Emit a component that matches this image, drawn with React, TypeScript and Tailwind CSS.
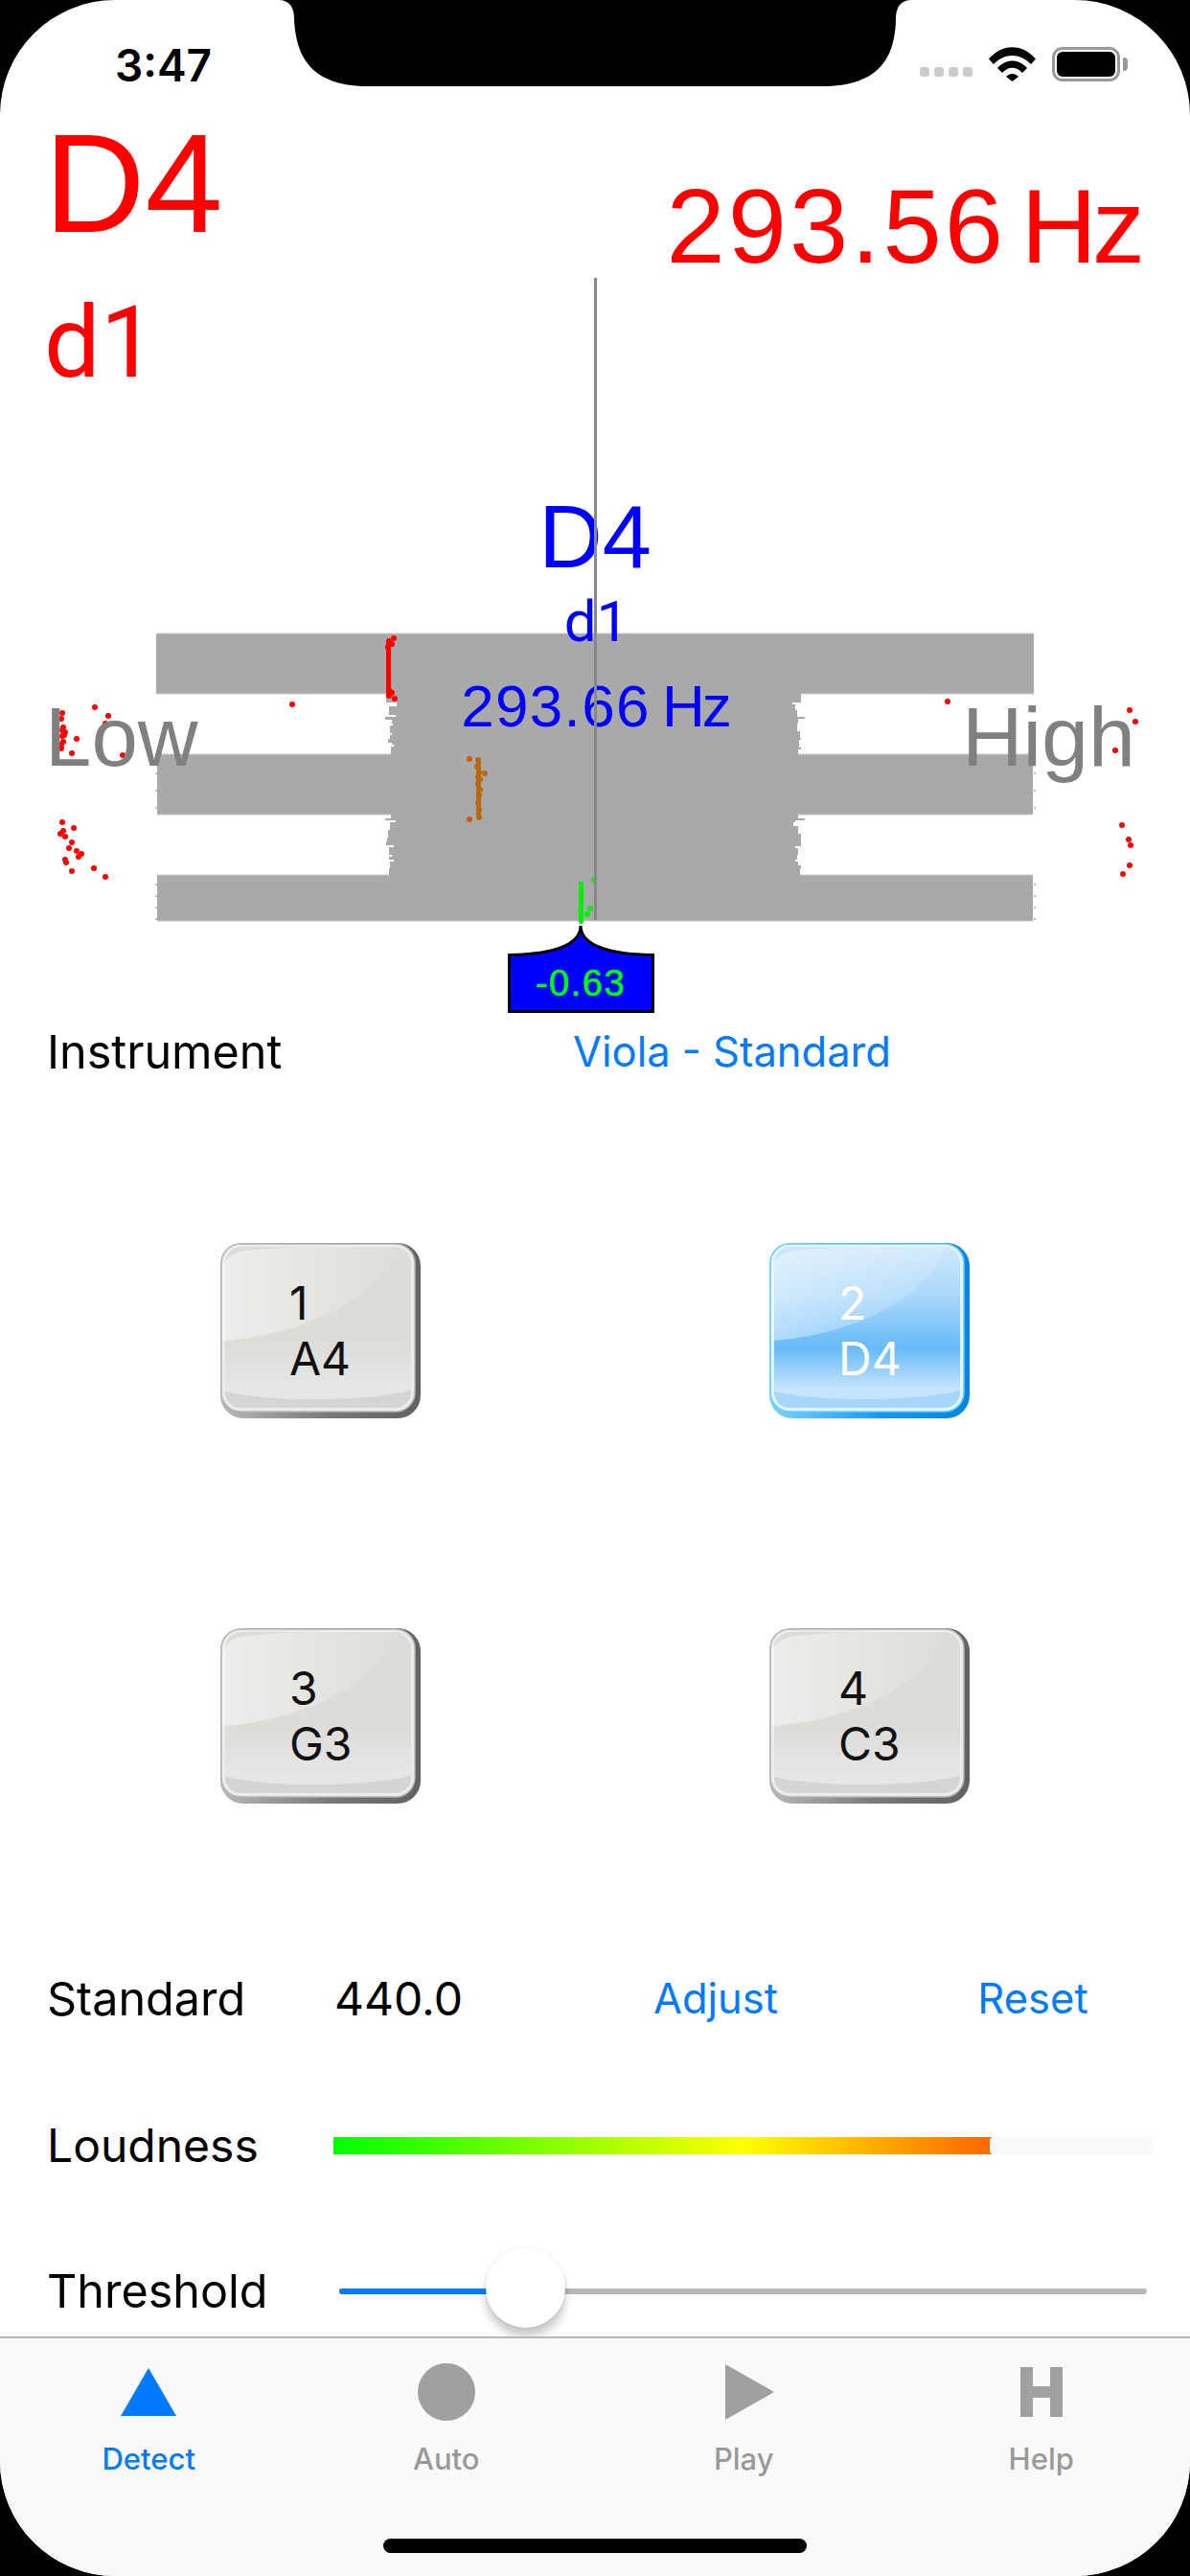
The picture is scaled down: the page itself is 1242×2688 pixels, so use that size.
import type { ReactNode } from 'react'

const HELV = "font-['Liberation_Sans',Arial,sans-serif]"

// sampled off the trace: [y where the step starts, x of the gray edge]
const EDGE_L1 = [[724, 403], [733, 414], [737, 406], [746, 413], [748, 402], [751, 409], [755, 410], [757, 407], [765, 409], [767, 407], [771, 405], [775, 409], [777, 411], [779, 408]]
const EDGE_L2 = [[850, 408], [854, 402], [856, 413], [858, 407], [866, 405], [874, 404], [878, 403], [882, 411], [884, 406], [892, 409], [894, 406], [897, 411], [899, 407], [906, 406]]
const EDGE_R1 = [[724, 836], [733, 827], [735, 830], [741, 832], [748, 840], [750, 833], [755, 832], [763, 835], [770, 836], [772, 834], [780, 836], [782, 833]]
const EDGE_R2 = [[850, 833], [854, 840], [856, 830], [858, 828], [862, 833], [870, 836], [880, 836], [883, 830], [885, 833], [892, 832], [897, 830], [899, 833], [903, 836], [906, 835]]
const END_TICKS = [[162, 806], [162, 824], [162, 842], [162, 922], [162, 934], [162, 946], [162, 958], [1079, 806], [1079, 824], [1079, 842], [1079, 922], [1079, 934], [1079, 946], [1079, 958]]

const RED_DOTS = [
  [65, 744], [64, 750], [66, 759], [65, 762], [68, 764], [67, 767], [65, 768], [66, 774], [64, 777], [64, 781], [75, 786], [80, 771],
  [99, 738], [113, 747], [110, 755], [128, 788], [305, 735],
  [65, 858], [77, 864], [66, 867], [63, 870], [68, 873], [75, 879], [72, 885], [80, 888], [85, 891], [82, 894], [68, 897], [69, 900],
  [75, 909], [98, 906], [110, 915],
  [989, 732], [1179, 741], [1185, 753], [1164, 783], [1171, 861], [1178, 876], [1180, 882], [1179, 903], [1172, 912],
]
const RED_TRACE = [[411, 666], [406, 669], [409, 672], [405, 675], [406, 720], [409, 723], [406, 726], [412, 729]]
const BROWN_DOTS = [[499, 793], [498, 800], [500, 806], [499, 811], [501, 813], [499, 818], [501, 824], [500, 830], [499, 838], [500, 845], [500, 853], [506, 807]]
const ORANGE_DOTS = [[490, 792], [490, 855]]
const GREEN_DOTS = [[620, 918], [616, 948], [613, 954], [606, 951]]

function Edge({ steps, stop, to }: { steps: number[][]; stop: number; to: number }) {
  return (
    <>
      {steps.map(([y, x], i) => {
        const next = i + 1 < steps.length ? steps[i + 1][0] : stop
        return <rect key={y} x={Math.min(x, to)} y={y} width={Math.abs(to - x)} height={next - y} fill="#a9a9a9" />
      })}
    </>
  )
}

function TunerChart() {
  return (
    <svg viewBox="0 120 1242 950" className="absolute inset-0 w-[1242px] h-[950px]">
      <rect x="163" y="661" width="916" height="63" fill="#a9a9a9" />
      <rect x="164" y="787" width="914" height="63" fill="#a9a9a9" />
      <rect x="164" y="913" width="914" height="48" fill="#a9a9a9" />
      <rect x="414" y="724" width="413" height="189" fill="#a9a9a9" />
      <Edge steps={EDGE_L1} stop={787} to={414} />
      <Edge steps={EDGE_L2} stop={913} to={414} />
      <Edge steps={EDGE_R1} stop={787} to={827} />
      <Edge steps={EDGE_R2} stop={913} to={827} />
      {END_TICKS.map(([x, y]) => <rect key={`${x}-${y}`} x={x} y={y} width="2" height="2" fill="#bdbdbd" />)}
      <path d="M163 661H1079M163 724H403M836 724H1079M164 787H408M833 787H1078M164 850H408M833 850H1078M164 913H406M835 913H1078M164 961H1078" stroke="#c9c9c9" strokeWidth="1" fill="none" />

      <rect x="403" y="668" width="5" height="60" fill="#ff0000" />
      {RED_TRACE.map(([x, y]) => <circle key={`${x}-${y}`} cx={x} cy={y} r="3" fill="#ff0000" />)}
      {RED_DOTS.map(([x, y]) => <circle key={`${x}-${y}`} cx={x} cy={y} r="3" fill="#ff0000" />)}
      <rect x="497" y="794" width="5" height="58" rx="2" fill="#b8690a" />
      {BROWN_DOTS.map(([x, y]) => <circle key={`${x}-${y}`} cx={x} cy={y} r="3" fill="#b8690a" />)}
      {ORANGE_DOTS.map(([x, y]) => <circle key={`${x}-${y}`} cx={x} cy={y} r="3" fill="#d2580a" />)}
      <rect x="604" y="920" width="5" height="44" rx="2" fill="#00ee00" />
      {GREEN_DOTS.map(([x, y]) => <circle key={`${x}-${y}`} cx={x} cy={y} r="3" fill="#00ee00" />)}

      <path
        d="M606 966C606 985 580 996 531.500 996.500V1055.500H681.500V996.500C632 996 606 985 606 966Z"
        fill="#0000ff"
        stroke="#000000"
        strokeWidth="3"
      />
      <text x="606" y="1039" textAnchor="middle" fontSize="38" letterSpacing="1.500" stroke="#00ff00" strokeWidth="0.600" fill="#00ff00" className={HELV}>-0.63</text>
    </svg>
  )
}

function KeyArt({ active }: { active: boolean }) {
  const id = active ? 'on' : 'off'
  return (
    <svg viewBox="0 0 209 183" className="absolute inset-0 w-[209px] h-[183px]">
      <defs>
        <linearGradient id={`${id}-edge`} x1="0" x2="1" y1="0" y2="0">
          <stop offset="0" stopColor={active ? '#7fd4ff' : '#b8b8b8'} />
          <stop offset="0.55" stopColor={active ? '#149af2' : '#787878'} />
          <stop offset="1" stopColor={active ? '#0a84e0' : '#626262'} />
        </linearGradient>
        <linearGradient id={`${id}-face`} x1="0" x2="0" y1="0" y2="1">
          {active ? (
            <>
              <stop offset="0" stopColor="#cfe8fb" />
              <stop offset="0.3" stopColor="#a9d8fa" />
              <stop offset="0.63" stopColor="#67baf8" />
              <stop offset="0.88" stopColor="#c6e4fb" />
            </>
          ) : (
            <>
              <stop offset="0" stopColor="#dcdcd8" />
              <stop offset="0.6" stopColor="#dcddd9" />
              <stop offset="0.88" stopColor="#e6e6e6" />
            </>
          )}
        </linearGradient>
        <linearGradient id={`${id}-gloss`} x1="0" x2="1" y1="0" y2="0">
          <stop offset="0" stopColor="#ffffff" stopOpacity={active ? 0.45 : 0.5} />
          <stop offset="1" stopColor="#ffffff" stopOpacity={active ? 0.1 : 0.03} />
        </linearGradient>
      </defs>
      <rect x="0" y="0" width="209" height="183" rx="24" fill={`url(#${id}-edge)`} />
      <rect x="1" y="1" width="202" height="175" rx="20" fill={active ? '#e2f4ff' : '#ececec'} stroke={active ? '#68cdfb' : '#b4b4b4'} strokeWidth="1.500" />
      <rect x="5" y="4" width="194" height="168" rx="17" fill={`url(#${id}-face)`} />
      <path d="M5 155C50 166 150 166 199 154V156A16 16 0 0 1 183 172H21A16 16 0 0 1 5 156Z" fill={active ? '#a6d6f9' : '#d4d5d7'} />
      <path d="M2 102V30C2 16 14 10 28 8C80 3 130 3 185 2C170 50 100 95 2 102Z" fill={`url(#${id}-gloss)`} />
    </svg>
  )
}

function TuningKey({ num, note, active }: { num: string; note: string; active?: boolean }) {
  return (
    <div className="relative w-[209px] h-[183px]">
      <KeyArt active={!!active} />
      <div className={`relative pl-[72px] pt-[34px] text-[48px] leading-[58px] ${active ? 'text-white' : 'text-[#111111]'}`}>
        <div>{num}</div>
        <div>{note}</div>
      </div>
    </div>
  )
}

function Tab({ label, active, children }: { label: string; active?: boolean; children: ReactNode }) {
  return (
    <div className="flex flex-col items-center">
      <div className="h-[62px] flex items-center justify-center">{children}</div>
      <span className={`text-[31px] font-medium leading-[36px] mt-[21px] ${active ? 'text-[#007aff]' : 'text-[#999999]'}`}>{label}</span>
    </div>
  )
}

export default function App() {
  return (
    <div className="relative w-[1242px] h-[2688px] bg-black overflow-hidden font-['Inter',sans-serif]">
      <div className="relative w-full h-full bg-white rounded-[120px] overflow-hidden flex flex-col">
        {/* status bar */}
        <div className="h-[120px] shrink-0 flex items-start justify-between pl-[120px] pr-[65px] pt-[39px]">
          <span className="text-[46px] leading-[58px] font-semibold text-black">3:47</span>
          <div className="flex items-center gap-[17px] h-[36px] mt-[10px]">
            <div className="flex gap-[5px] mt-[16px]">
              <div className="w-[10px] h-[10px] rounded-[3px] bg-[#cccccc]" />
              <div className="w-[10px] h-[10px] rounded-[3px] bg-[#cccccc]" />
              <div className="w-[10px] h-[10px] rounded-[3px] bg-[#cccccc]" />
              <div className="w-[10px] h-[10px] rounded-[3px] bg-[#cccccc]" />
            </div>
            <svg viewBox="0 0 49 36" className="w-[49px] h-[36px]">
              <path d="M0 12.500C14 -4 35 -4 49 12.500L44 18C32 6 17 6 5 18Z" fill="#000000" />
              <path d="M9 22C18 12 31 12 40 22L35 27C28 20 21 20 14 27Z" fill="#000000" />
              <path d="M18 31C22 27 27 27 31 31L24.500 36Z" fill="#000000" />
            </svg>
            <div className="flex items-center gap-[3px]">
              <div className="w-[71px] h-[36px] rounded-[11px] border-[3px] border-[#999999] p-[2px]">
                <div className="w-full h-full rounded-[6px] bg-black" />
              </div>
              <div className="w-[5px] h-[14px] rounded-r-[4px] bg-[#999999]" />
            </div>
          </div>
        </div>

        {/* tuner */}
        <div className={`relative h-[950px] shrink-0 ${HELV}`}>
          <TunerChart />
          <div className="relative flex justify-between text-[#ff0000] pl-[46px] pr-[52px]">
            <div>
              <div className="text-[146px] leading-[144px]">D4</div>
              <div className="font-['Roboto',sans-serif] text-[104px] leading-none mt-[42px]">d1</div>
            </div>
            <div className="text-[110px] leading-none mt-[61px] [word-spacing:-15px]">
              <span className="tracking-[3px]">293.56</span> <span className="tracking-[-5px]">Hz</span>
            </div>
          </div>
          <div className="absolute left-0 right-0 top-[394px] flex flex-col items-center text-[#0000ff]">
            <div className="text-[92px] leading-none">D4</div>
            <div className="font-['Roboto',sans-serif] text-[60px] leading-none mt-[13px] ml-[3px]">d1</div>
            <div className="text-[62px] leading-none mt-[27px] [word-spacing:-5px]">
              <span className="tracking-[1.3px]">293.66</span> <span className="tracking-[-3px]">Hz</span>
            </div>
          </div>
          <div className="absolute left-[47px] top-[605px] text-[87px] leading-none text-[#808080]">Low</div>
          <div className="absolute right-[57px] top-[605px] text-[88px] leading-none text-[#808080]">High</div>
          <div className="absolute left-[620px] top-[170px] w-[3px] h-[670px] bg-[#888888]" />
        </div>

        {/* instrument */}
        <div className="h-[56px] shrink-0 flex items-center text-[48.5px] text-black pl-[49px]">
          <span className="w-[549px]">Instrument</span>
          <span className="text-[43.5px] text-[#007aff]">Viola - Standard</span>
        </div>

        {/* strings */}
        <div className="grid grid-cols-[209px_209px] gap-x-[364px] gap-y-[219px] pl-[230px] mt-[171px]">
          <TuningKey num="1" note="A4" />
          <TuningKey num="2" note="D4" active />
          <TuningKey num="3" note="G3" />
          <TuningKey num="4" note="C3" />
        </div>

        {/* controls */}
        <div className="h-[56px] shrink-0 mt-[176px] flex items-center pl-[49px] text-[48.5px] text-black">
          <span className="w-[300px]">Standard</span>
          <span className="w-[298px] text-[48px]">440.0</span>
          <span className="w-[200px] text-center text-[43.5px] text-[#007aff]">Adjust</span>
          <span className="w-[200px] ml-[131px] text-center text-[43.5px] text-[#007aff]">Reset</span>
        </div>
        <div className="h-[56px] shrink-0 mt-[97px] flex items-center pl-[49px] text-[48px] text-black">
          <span className="w-[299px]">Loudness</span>
          <div className="w-[856px] h-[18px] flex justify-end bg-linear-to-r/srgb from-[#00ff00] via-[#ffff00] to-[#ff0000]">
            <div className="w-[171px] h-full rounded-l-[4px] bg-[#fafafa]" />
          </div>
        </div>
        <div className="h-[56px] shrink-0 mt-[96px] flex items-center pl-[49px] text-[48.5px] text-black">
          <span className="w-[305px]">Threshold</span>
          <div className="relative w-[843px] h-[6px] rounded-full bg-[#b6b6b6]">
            <div className="h-full w-[194px] rounded-l-full bg-[#007aff]" />
            <div className="absolute left-[153px] top-[-43px] w-[83px] h-[84px] rounded-full bg-white shadow-[0_9px_10px_rgba(0,0,0,0.22),0_0_3px_rgba(0,0,0,0.08)]" />
          </div>
        </div>

        {/* tab bar */}
        <div className="mt-auto relative h-[250px] shrink-0 bg-[#f9f9f9] border-t-[2px] border-[#b6b6b6] grid grid-cols-4 pt-[25px]">
          <Tab label="Detect" active>
            <svg viewBox="0 0 58 50" className="w-[58px] h-[50px]"><path d="M29 0L58 50H0Z" fill="#007aff" /></svg>
          </Tab>
          <Tab label="Auto">
            <div className="w-[60px] h-[60px] rounded-full bg-[#a0a0a0]" />
          </Tab>
          <Tab label="Play">
            <svg viewBox="0 0 51 58" className="w-[51px] h-[58px] ml-[12px]"><path d="M0 0L51 29L0 58Z" fill="#a0a0a0" /></svg>
          </Tab>
          <Tab label="Help">
            <svg viewBox="0 0 44 52" className="w-[44px] h-[52px]"><path d="M0 0H13V20H31V0H44V52H31V32H13V52H0Z" fill="#a0a0a0" /></svg>
          </Tab>
          <div className="absolute left-[400px] top-[209px] w-[442px] h-[15px] rounded-full bg-black" />
        </div>

        {/* notch */}
        <svg viewBox="0 0 1242 90" className="absolute top-0 left-0 w-[1242px] h-[90px]">
          <path d="M292 0Q307 1 307 20C309 60 325 90 385 90H858C918 90 934 60 935 20Q935 1 950 0Z" fill="#000000" />
        </svg>
      </div>
    </div>
  )
}
